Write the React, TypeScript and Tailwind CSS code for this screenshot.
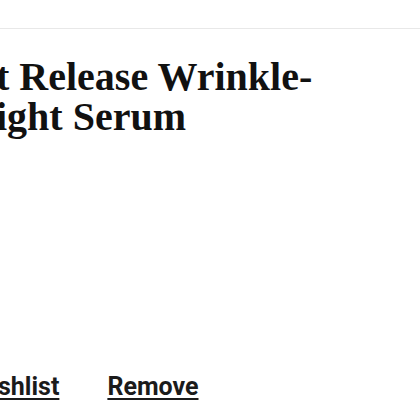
export default function App() {
  return (
    <div className="h-[420px] w-[420px] overflow-hidden bg-white">
      <div className="h-[29px] border-b border-[#e8e8e8]" />
      <div className="-ml-[4px] pt-[28px]">
        <h1 className="whitespace-nowrap text-[40px] font-bold leading-[40px] text-[#111] [font-family:'Liberation_Serif',serif]">
          t Release Wrinkle-
          <br />
          ight Serum
        </h1>
      </div>
      <div className="-ml-[2px] mt-[237px] flex items-center gap-[48px] whitespace-nowrap text-[25px] font-bold leading-[25px] text-[#1b1b1b] [font-family:Roboto,sans-serif]">
        <a href="#" className="underline decoration-2 underline-offset-[3px]">
          shlist
        </a>
        <a href="#" className="underline decoration-2 underline-offset-[3px]">
          Remove
        </a>
      </div>
    </div>
  );
}
